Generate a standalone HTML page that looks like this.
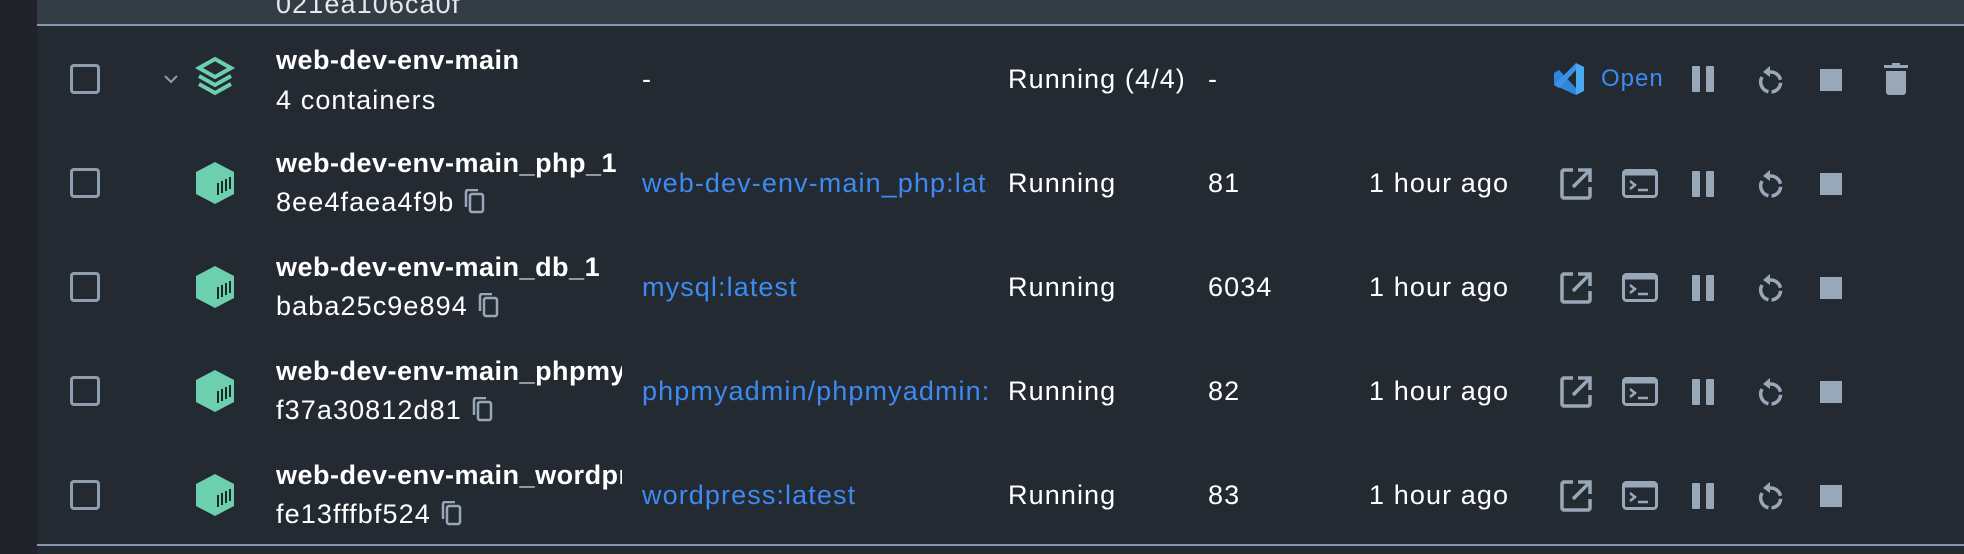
<!DOCTYPE html>
<html><head><meta charset="utf-8"><style>
*{margin:0;padding:0;box-sizing:border-box}
body{width:1964px;height:554px;background:#242a32;position:relative;overflow:hidden;font-family:"Liberation Sans","DejaVu Sans",sans-serif;color:#fff}
.l{position:absolute;left:0;top:0;width:37px;height:554px;background:#1f2329}
.top{position:absolute;left:37px;top:0;width:1927px;height:26px;background:#343d46;border-bottom:2px solid #8598ad}
.bot{position:absolute;left:37px;top:544px;width:1927px;height:2px;background:#8598ad}
.t{position:absolute;white-space:nowrap;overflow:hidden;font-size:27px;line-height:32px;letter-spacing:1.1px}
.b{font-weight:bold;letter-spacing:0.5px}
.a{color:#3d8af0}
.cb{position:absolute;left:70px;width:30px;height:30px;border:3px solid #8e9daf;border-radius:4px}
svg{position:absolute}
.t svg{position:static;vertical-align:-4px;margin-left:10px}
</style></head><body>
<div class="l"></div><div class="top"></div><div class="bot"></div>
<div class="t" style="left:276px;top:-12px;color:#e6e9ec">021ea106ca0f</div>

<!-- row 0 -->
<div class="cb" style="top:64px"></div>
<svg style="left:162px;top:72px" width="18" height="14" viewBox="0 0 18 14"><path d="M3 4l6 6 6-6" stroke="#8e9daf" stroke-width="2" fill="none"/></svg>
<svg style="left:194px;top:56px" width="42" height="40" viewBox="0 0 42 40"><path d="M21 3L37 12 21 21 5 12Z" stroke="#6ccfae" stroke-width="4" fill="none"/><path d="M5 20l16 9 16-9M5 28l16 9 16-9" stroke="#6ccfae" stroke-width="4" fill="none"/></svg>
<div class="t b" style="left:276px;top:44px">web-dev-env-main</div>
<div class="t" style="left:276px;top:84px">4 containers</div>
<div class="t" style="left:642px;top:63px">-</div>
<div class="t" style="left:1008px;top:63px">Running (4/4)</div>
<div class="t" style="left:1208px;top:63px">-</div>
<svg style="left:1552px;top:62px" width="34" height="34" viewBox="0 0 34 34"><path d="M24 1L32 5V29L24 33Z" fill="#4aa8f0"/><path d="M2 11l5-3 17 18v7L2 23Z" fill="#2f86dc"/><path d="M2 23l5 3 17-18V1Z" fill="#3b92e6"/></svg>
<div class="t a" style="left:1601px;top:63px;font-size:24px;letter-spacing:1px">Open</div>

<svg width="0" height="0"><defs>
<g id="pause"><rect x="0" y="0" width="8" height="26" rx="1" fill="#98a8b8"/><rect x="14" y="0" width="8" height="26" rx="1" fill="#98a8b8"/></g>
<g id="rst"><path d="M14 8A10 10 0 1 1 6 13" stroke="#98a8b8" stroke-width="3.5" fill="none" stroke-dasharray="14 3 14 3 40"/><path d="M14 2L7 8 14 13Z" fill="#98a8b8"/></g>
<g id="stop"><rect x="0" y="0" width="22" height="22" fill="#98a8b8"/></g>
</defs></svg>

<svg style="left:1692px;top:66px" width="24" height="28"><use href="#pause"/></svg>
<svg style="left:1754px;top:62px" width="32" height="34"><use href="#rst" transform="translate(2,2)"/></svg>
<svg style="left:1820px;top:69px" width="24" height="24"><use href="#stop"/></svg>
<svg style="left:1883px;top:63px" width="26" height="34" viewBox="0 0 26 34"><rect x="1" y="2" width="24" height="3" fill="#98a8b8"/><rect x="9" y="0" width="8" height="3" fill="#98a8b8"/><path d="M3 8h20v21a3 3 0 0 1-3 3H6a3 3 0 0 1-3-3Z" fill="#98a8b8"/></svg>

<div id="rows"></div>
<script>
var rows=[["web-dev-env-main_php_1","8ee4faea4f9b","web-dev-env-main_php:latest","81"],
["web-dev-env-main_db_1","baba25c9e894","mysql:latest","6034"],
["web-dev-env-main_phpmyadmin_1","f37a30812d81","phpmyadmin/phpmyadmin:latest","82"],
["web-dev-env-main_wordpress_1","fe13fffbf524","wordpress:latest","83"]];
var h="";
rows.forEach(function(r,i){var c=183+i*104;
h+='<div class="cb" style="top:'+(c-15)+'px"></div>';
h+='<svg style="left:194px;top:'+(c-22)+'px" width="42" height="44" viewBox="0 0 42 44"><path d="M21 1L40 11V33L21 43 2 33V11Z" fill="#6ccfae"/><path d="M24 22v12M28 20v12M32 18v12M36 16v12" stroke="#1c2a2a" stroke-width="2"/></svg>';
h+='<div class="t b" style="left:276px;top:'+(c-36)+'px;width:346px">'+r[0]+'</div>';
h+='<div class="t" style="left:276px;top:'+(c+3)+'px">'+r[1]+'<svg width="22" height="26" viewBox="0 0 22 26"><rect x="6" y="5" width="13" height="18" rx="2" stroke="#98a8b8" stroke-width="2.5" fill="none"/><path d="M2 18V3a2 2 0 0 1 2-2h10" stroke="#98a8b8" stroke-width="2.5" fill="none"/></svg></div>';
h+='<div class="t a" style="left:642px;top:'+(c-16)+'px;width:346px">'+r[2]+'</div>';
h+='<div class="t" style="left:1008px;top:'+(c-16)+'px">Running</div>';
h+='<div class="t" style="left:1208px;top:'+(c-16)+'px">'+r[3]+'</div>';
h+='<div class="t" style="left:1369px;top:'+(c-16)+'px">1 hour ago</div>';
h+='<svg style="left:1559px;top:'+(c-16)+'px" width="34" height="34" viewBox="0 0 34 34"><path d="M14 3H5a2 2 0 0 0-2 2v24a2 2 0 0 0 2 2h24a2 2 0 0 0 2-2v-9" stroke="#98a8b8" stroke-width="3.5" fill="none"/><path d="M14 20L30 4M19 3h12v12" stroke="#98a8b8" stroke-width="3.5" fill="none"/></svg>';
h+='<svg style="left:1622px;top:'+(c-14)+'px" width="36" height="30" viewBox="0 0 36 30"><rect x="1.5" y="1.5" width="33" height="26" rx="3" stroke="#98a8b8" stroke-width="3" fill="none"/><rect x="1.5" y="1.5" width="33" height="5" fill="#98a8b8"/><path d="M8 12l5 4-5 4" stroke="#98a8b8" stroke-width="2.5" fill="none"/><path d="M16 21h10" stroke="#98a8b8" stroke-width="2.5"/></svg>';
h+='<svg style="left:1692px;top:'+(c-12)+'px" width="24" height="28"><use href="#pause"/></svg>';
h+='<svg style="left:1754px;top:'+(c-17)+'px" width="32" height="34"><use href="#rst" transform="translate(2,2)"/></svg>';
h+='<svg style="left:1820px;top:'+(c-10)+'px" width="24" height="24"><use href="#stop"/></svg>';
});
document.getElementById("rows").innerHTML=h;
</script>
</body></html>
